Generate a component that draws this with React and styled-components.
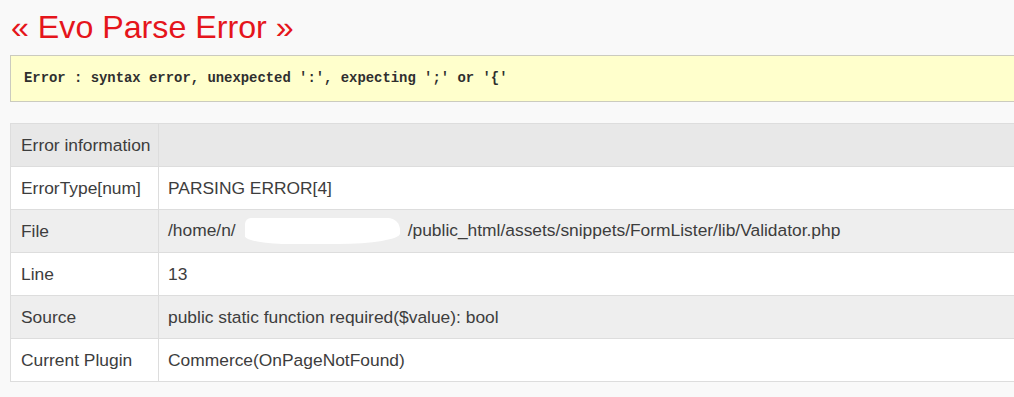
import React from "react";
import styled, { createGlobalStyle } from "styled-components";

const GlobalStyle = createGlobalStyle`
  html, body {
    margin: 0;
    padding: 0;
    background: #f9f9f9;
    overflow: hidden;
  }
`;

const Page = styled.div`
  width: 1120px;
  padding: 9px 0 0 10px;
  font-family: "Liberation Sans", Arial, sans-serif;
`;

const Title = styled.h1`
  margin: 0 0 10px 1px;
  font-size: 32.2px;
  line-height: 36px;
  font-weight: normal;
  color: #e5151b;
`;

const Message = styled.div`
  background: #ffffcc;
  border: 1px solid #cbcbbf;
  padding: 15px 13px;
  font-family: "Liberation Mono", "DejaVu Sans Mono", monospace;
  font-weight: bold;
  font-size: 13.9px;
  line-height: 15px;
  color: #2f2f2f;
  margin-bottom: 21px;
`;

const Table = styled.table`
  width: 100%;
  border-collapse: collapse;
  table-layout: fixed;
  background: #fff;
  font-size: 17.4px;
  color: #3d3d3d;
`;

const Row = styled.tr`
  background: ${(p) => (p.$head ? "#e8e8e8" : p.$shade ? "#eeeeee" : "#ffffff")};
`;

const Cell = styled.td`
  border: 1px solid #dddddd;
  height: 43px;
  padding: ${(p) => (p.$label ? "0 4px 0 10px" : "0 10px 0 9px")};
  vertical-align: middle;
  white-space: nowrap;
  overflow: hidden;
  box-sizing: border-box;
  width: ${(p) => (p.$label ? "148px" : "auto")};
`;

/* redacted part of the file path */
const Hidden = styled.span`
  display: inline-block;
  width: 155px;
  height: 26px;
  margin: 0 8px 0 9px;
  vertical-align: middle;
  background: #ffffff;
  border-radius: 6px 12px 40% 30%;
`;

const rows = [
  { label: "ErrorType[num]", value: "PARSING ERROR[4]" },
  {
    label: "File",
    value: (
      <>
        /home/n/
        <Hidden />
        /public_html/assets/snippets/FormLister/lib/Validator.php
      </>
    ),
    shade: true,
  },
  { label: "Line", value: "13" },
  { label: "Source", value: "public static function required($value): bool", shade: true },
  { label: "Current Plugin", value: "Commerce(OnPageNotFound)" },
];

export default function App() {
  return (
    <>
      <GlobalStyle />
      <Page>
        <Title>« Evo Parse Error »</Title>
        <Message>
          Error : syntax error, unexpected ':', expecting ';' or '{"{"}'
        </Message>
        <Table>
          <tbody>
            <Row $head>
              <Cell $label>Error information</Cell>
              <Cell />
            </Row>
            {rows.map((r) => (
              <Row key={r.label} $shade={r.shade}>
                <Cell $label>{r.label}</Cell>
                <Cell>{r.value}</Cell>
              </Row>
            ))}
          </tbody>
        </Table>
      </Page>
    </>
  );
}
